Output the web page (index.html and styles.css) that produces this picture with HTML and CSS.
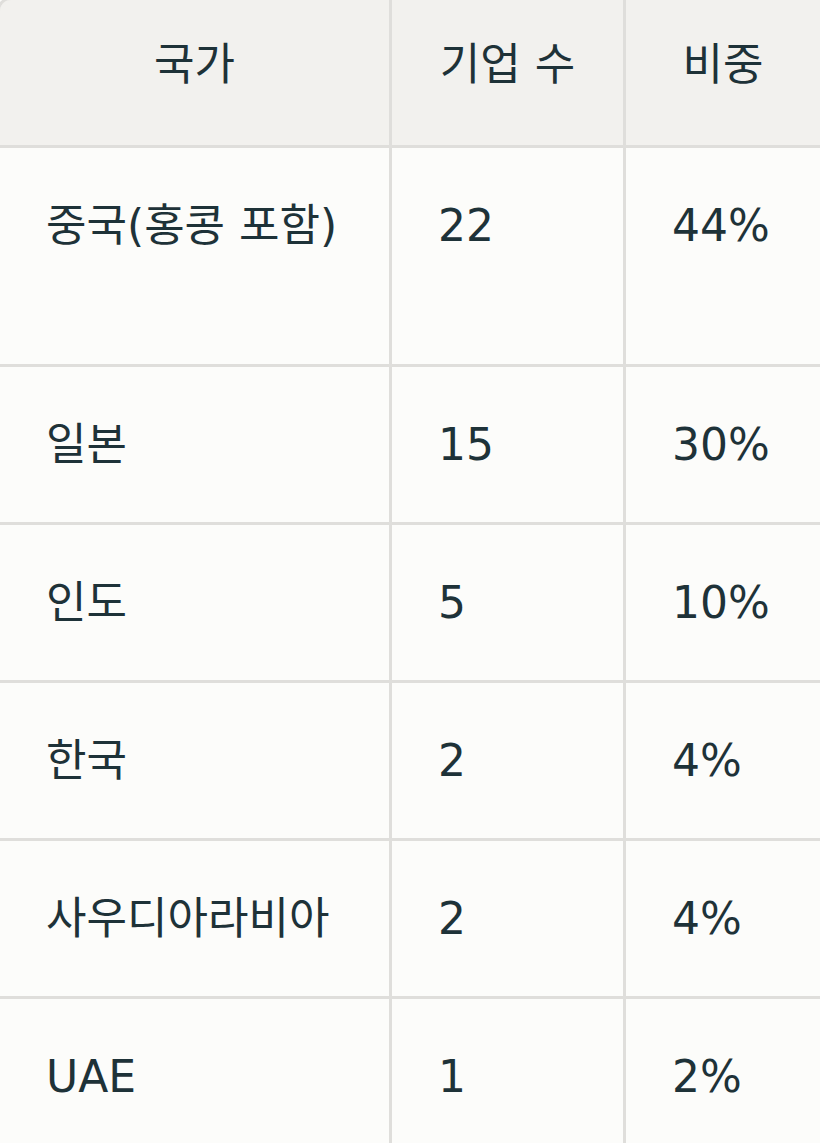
FILE: index.html
```html
<!DOCTYPE html>
<html lang="ko">
<head>
<meta charset="utf-8">
<title>국가별 기업 수</title>
<link rel="stylesheet" href="styles.css">
</head>
<body>
<div class="table-wrap">
  <div class="grid">
    <div class="cell head">국가</div>
    <div class="cell head">기업 수</div>
    <div class="cell head">비중</div>

    <div class="cell tall">중국(홍콩 포함)</div>
    <div class="cell tall">22</div>
    <div class="cell tall">44%</div>

    <div class="cell">일본</div>
    <div class="cell">15</div>
    <div class="cell">30%</div>

    <div class="cell">인도</div>
    <div class="cell">5</div>
    <div class="cell">10%</div>

    <div class="cell">한국</div>
    <div class="cell">2</div>
    <div class="cell">4%</div>

    <div class="cell">사우디아라비아</div>
    <div class="cell">2</div>
    <div class="cell">4%</div>

    <div class="cell">UAE</div>
    <div class="cell">1</div>
    <div class="cell">2%</div>
  </div>
</div>
</body>
</html>
```

FILE: styles.css
```css
html, body {
  margin: 0;
  padding: 0;
  overflow: hidden;
  background: #fcfcfa;
}

body {
  font-family: "DejaVu Sans", "Noto Sans CJK KR", sans-serif;
  color: #1e3238;
}

.table-wrap {
  margin: -3px 0 0 -3px;
  width: 820px;
  border: 3px solid #dfdedb;
  border-radius: 14px 0 0 0;
  overflow: hidden;
}

.grid {
  display: grid;
  grid-template-columns: 389px 231px 194px;
  gap: 3px;
  background: #dfdedb;
}

.cell {
  background: #fcfcfa;
  font-size: 44px;
  line-height: 62px;
  padding: 47px 0 46px 46px;
  white-space: nowrap;
}

.cell.head {
  background: #f2f1ee;
  text-align: center;
  padding: 34px 0 49px 0;
}

.cell.tall {
  padding-bottom: 107px;
}
```
